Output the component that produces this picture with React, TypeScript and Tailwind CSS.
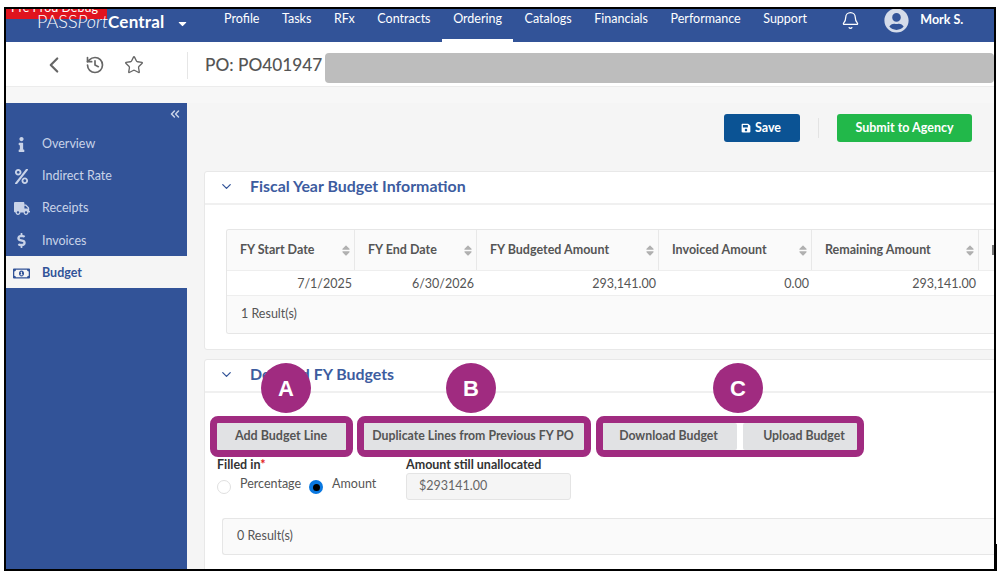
import { Bell, ChevronDown, ChevronLeft, ChevronsLeft, History, Star } from 'lucide-react';
import {
  FaCaretDown,
  FaDollarSign,
  FaInfo,
  FaPercent,
  FaRegMoneyBillAlt,
  FaSave,
  FaSort,
  FaTruck,
  FaUserCircle,
} from 'react-icons/fa';

const navItems = ['Profile', 'Tasks', 'RFx', 'Contracts', 'Ordering', 'Catalogs', 'Financials', 'Performance', 'Support'];

const sideItems = [
  { label: 'Overview', icon: FaInfo, size: 'h-[15px] w-[15px]' },
  { label: 'Indirect Rate', icon: FaPercent, size: 'h-[15px] w-[15px]' },
  { label: 'Receipts', icon: FaTruck, size: 'h-[15px] w-[16px]' },
  { label: 'Invoices', icon: FaDollarSign, size: 'h-[15px] w-[15px]' },
  { label: 'Budget', icon: FaRegMoneyBillAlt, size: 'h-[15px] w-[17px]', active: true },
];

const columns = ['FY Start Date', 'FY End Date', 'FY Budgeted Amount', 'Invoiced Amount', 'Remaining Amount'];
const values = ['7/1/2025', '6/30/2026', '293,141.00', '0.00', '293,141.00'];

function Callout({ letter, className }: { letter: string; className: string }) {
  return (
    <div
      className={`absolute top-[354px] flex h-[50px] w-[50px] items-center justify-center rounded-full bg-[#a02b80] font-['Liberation_Sans',sans-serif] text-[22px] font-bold text-white ${className}`}
    >
      {letter}
    </div>
  );
}

function Ring({ className }: { className: string }) {
  return <div className={`absolute top-[407px] h-[41px] rounded-[8px] border-[7px] border-[#a02b80] ${className}`} />;
}

function GrayButton({ label, className }: { label: string; className: string }) {
  return (
    <button className={`flex h-[27px] items-center justify-center rounded-[2px] bg-[#e1e2e4] font-bold text-[#555] ${className}`}>
      {label}
    </button>
  );
}

export default function App() {
  return (
    <div className="relative h-[576px] w-[1001px] bg-white pb-[5px] pl-[4px] pr-[5px] pt-[7px] font-['Lato',sans-serif]">
      <div className="relative flex h-full w-full flex-col overflow-hidden border-2 border-black bg-white">
        <header className="flex h-[33px] shrink-0 items-stretch bg-[#325398] text-white">
          <div className="relative z-10 ml-[31px] flex w-[175.8px] items-center pb-[8px]">
            <span className="text-[18px] font-light">
              PASS<span className="italic">Port</span>
            </span>
            <span className="text-[17px] font-bold tracking-[0.2px]">Central</span>
            <FaCaretDown className="ml-[11px] mt-[3px] h-[13px] w-[13px]" />
          </div>
          {navItems.map((item) => (
            <div
              key={item}
              className={`flex items-start px-[11.3px] pt-[2px] text-[12.5px] leading-[15px] ${
                item === 'Ordering' ? 'border-b-[3px] border-white' : ''
              }`}
            >
              {item}
            </div>
          ))}
          <Bell className="ml-[23px] mt-[2px] h-[19px] w-[19px]" strokeWidth={1.6} />
          <FaUserCircle className="ml-[24px] mt-[-1px] h-[25px] w-[25px] text-[#d5dcea]" />
          <span className="ml-[11px] mt-[3px] text-[12.5px] font-bold leading-[15px]">Mork S.</span>
        </header>

        <div className="flex h-[45px] shrink-0 items-center border-b border-[#ececec] bg-white pt-[2px]">
          <div className="flex w-[181px] shrink-0 items-center">
            <ChevronLeft className="ml-[35px] h-[26px] w-[26px] text-[#666]" strokeWidth={2} />
            <History className="ml-[18px] h-[20px] w-[20px] text-[#666]" strokeWidth={2} />
            <Star className="ml-[19px] h-[20px] w-[20px] text-[#666]" strokeWidth={1.6} />
          </div>
          <div className="flex h-[27px] items-center border-l border-[#e6e6e6] pl-[17px] text-[17.25px] font-medium text-[#555]">
            PO: PO401947
          </div>
          <div className="ml-[3px] mt-[5px] h-[30px] flex-1 rounded-[4px] bg-[#bdbdbd]" />
        </div>

        <div className="h-[16px] shrink-0 bg-[#f7f7f7]" />

        <div className="flex min-h-0 flex-1">
          <aside className="w-[181px] shrink-0 bg-[#325398]">
            <div className="flex h-[24px] justify-end pr-[5px] pt-[4px]">
              <ChevronsLeft className="h-[14px] w-[14px] text-[#c9d3e8]" strokeWidth={2.6} />
            </div>
            {sideItems.map(({ label, icon: Icon, size, active }) => (
              <div
                key={label}
                className={`flex h-[32.25px] items-center pt-[2px] text-[12.5px] ${
                  active ? 'bg-[#f5f5f5] font-bold text-[#325398]' : 'text-[#c9d3e8]'
                }`}
              >
                <span className="flex w-[36px] justify-center pr-[5px]">
                  <Icon className={size} />
                </span>
                {label}
              </div>
            ))}
          </aside>

          <main className="min-w-0 flex-1 overflow-hidden bg-[#f5f5f5] pl-[17px]">
            <div className="flex h-[68px] items-start gap-[18px] pl-[520px] pt-[11px]">
              <button className="flex h-[28px] w-[76px] items-center gap-[4px] rounded-[3px] bg-[#0b5394] pl-[17px] text-[12.5px] font-bold text-white">
                <FaSave className="h-[10px] w-[10px]" />
                Save
              </button>
              <div className="mt-[4px] h-[20px] border-l border-[#e3e3e3]" />
              <button className="flex h-[28px] w-[135px] items-center justify-center rounded-[3px] bg-[#22b84a] text-[12.5px] font-bold text-white">
                Submit to Agency
              </button>
            </div>

            <section className="h-[179px] w-[820px] rounded-[3px] border border-[#e8e8e8] bg-white">
              <div className="flex h-[33px] items-center border-b-2 border-[#f0f0f0] pb-[3px]">
                <ChevronDown className="ml-[14px] h-[15px] w-[15px] text-[#325398]" strokeWidth={2} />
                <h2 className="ml-[16px] text-[15.9px] font-bold text-[#3d5c9f]">Fiscal Year Budget Information</h2>
              </div>
              <div className="ml-[21px] mt-[24px] h-[105px] overflow-hidden rounded-l-[3px] border border-r-0 border-[#e6e6e6]">
                <div className="grid h-[41px] grid-cols-[128px_122px_182px_153px_167px_60px] border-b border-[#eee] bg-[#fafafa] text-[12.5px] font-bold text-[#555]">
                  {columns.map((col) => (
                    <div key={col} className="flex items-center justify-between border-r border-[#e8e8e8] pl-[13px] pr-[3px]">
                      {col}
                      <FaSort className="h-[13px] w-[10px] text-[#b0b0b0]" />
                    </div>
                  ))}
                  <div className="flex items-center pl-[13px]">
                    <span className="h-[10px] w-[2px] bg-[#777]" />
                  </div>
                </div>
                <div className="grid h-[25px] grid-cols-[128px_122px_182px_153px_167px_60px] border-b border-[#eee] pt-[2px] text-[12.5px] text-[#555]">
                  {values.map((val, i) => (
                    // eslint-disable-next-line react/no-array-index-key
                    <div key={i} className="flex items-center justify-end pr-[3px]">
                      {val}
                    </div>
                  ))}
                </div>
                <div className="flex h-[37px] items-center bg-[#fafafa] pl-[14px] text-[12.5px] text-[#555]">1 Result(s)</div>
              </div>
            </section>

            <section className="mt-[9px] h-[240px] w-[820px] rounded-[3px] border border-[#e8e8e8] bg-white">
              <div className="flex h-[33px] items-center border-b-2 border-[#f0f0f0] pb-[3px]">
                <ChevronDown className="ml-[14px] h-[15px] w-[15px] text-[#325398]" strokeWidth={2} />
                <h2 className="ml-[16px] text-[15.9px] font-bold text-[#3d5c9f]">Detailed FY Budgets</h2>
              </div>
              <div className="ml-[11px] mt-[30px] flex">
                <GrayButton label="Add Budget Line" className="w-[130px] text-[12.5px]" />
                <GrayButton label="Duplicate Lines from Previous FY PO" className="ml-[18px] w-[221px] pr-[3px] text-[12.3px]" />
                <GrayButton label="Download Budget" className="ml-[18px] w-[134px] pr-[3px] text-[12.3px]" />
                <GrayButton label="Upload Budget" className="ml-[6px] w-[115px] pl-[7px] text-[12.3px]" />
              </div>
              <div className="ml-[12px] mt-[7px] flex text-[12.5px] text-[#555]">
                <div className="w-[189px]">
                  <div className="h-[15px] font-bold leading-[15px] text-[#333]">
                    Filled in<span className="text-[#e02020]">*</span>
                  </div>
                  <div className="mt-[4px] flex items-start leading-[15px]">
                    <span className="mt-[4px] h-[14px] w-[14px] rounded-full border border-[#e0e0e0] bg-white" />
                    <span className="ml-[9px]">Percentage</span>
                    <span className="ml-[8px] mt-[4px] flex h-[14px] w-[14px] items-center justify-center rounded-full bg-[#0a78e0]">
                      <span className="h-[7px] w-[7px] rounded-full bg-black" />
                    </span>
                    <span className="ml-[9px]">Amount</span>
                  </div>
                </div>
                <div>
                  <div className="h-[15px] font-bold leading-[15px] text-[#333]">Amount still unallocated</div>
                  <div className="mt-[1px] flex h-[27px] w-[165px] items-center rounded-[3px] border border-[#e4e4e4] bg-[#f5f5f5] pl-[12px] text-[#666]">
                    $293141.00
                  </div>
                </div>
              </div>
              <div className="ml-[17px] mt-[18px] flex h-[37px] items-center rounded-l-[3px] border border-r-0 border-[#e6e6e6] bg-[#fafafa] pl-[14px] text-[12.5px] text-[#555]">
                0 Result(s)
              </div>
            </section>
          </main>
        </div>

        <div className="absolute left-0 top-0 h-[10px] w-[101px] overflow-hidden bg-[#e0141e] pl-[5px] text-[12.5px] leading-[2px] text-white">
          <span className="-mt-[2px] block">Pre Prod Debug</span>
        </div>

        <Ring className="left-[204px] w-[143px]" />
        <Ring className="left-[351px] w-[234px]" />
        <Ring className="left-[590px] w-[268px]" />
        <Callout letter="A" className="left-[255px]" />
        <Callout letter="B" className="left-[440px]" />
        <Callout letter="C" className="left-[707px]" />
      </div>
      <div className="absolute left-[996px] top-[544px] h-[27px] w-[1px] bg-black" />
    </div>
  );
}
